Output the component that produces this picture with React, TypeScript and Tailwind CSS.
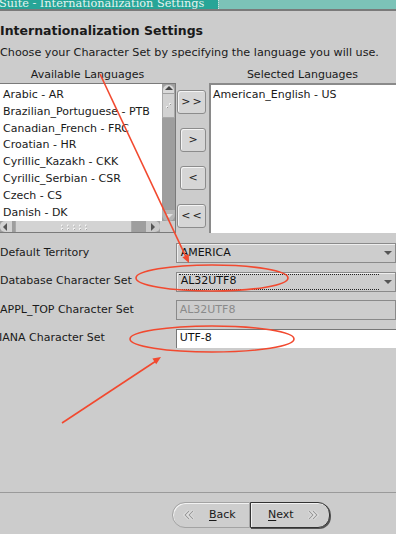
import React from "react";

const font = { fontFamily: '"DejaVu Sans", "Liberation Sans", sans-serif' };

const leftItems = [
  "Arabic - AR",
  "Brazilian_Portuguese - PTB",
  "Canadian_French - FRC",
  "Croatian - HR",
  "Cyrillic_Kazakh - CKK",
  "Cyrillic_Serbian - CSR",
  "Czech - CS",
  "Danish - DK",
];

function Dots({ vertical }: { vertical?: boolean }) {
  return (
    <svg width={vertical ? 10 : 30} height={vertical ? 10 : 8}>
      {vertical ? (
        <>
          <circle cx="3" cy="6" r="0.9" fill="#fff" />
          <circle cx="6" cy="3" r="0.9" fill="#fff" />
          <circle cx="3.5" cy="6.5" r="0.6" fill="#888" />
          <circle cx="6.5" cy="3.5" r="0.6" fill="#888" />
        </>
      ) : (
        [0, 1, 2, 3, 4].map((i) => (
          <g key={i}>
            <circle cx={3 + i * 6} cy="2.5" r="0.9" fill="#fff" />
            <circle cx={3 + i * 6} cy="6" r="0.9" fill="#fff" />
            <circle cx={3.5 + i * 6} cy="3" r="0.6" fill="#999" />
            <circle cx={3.5 + i * 6} cy="6.5" r="0.6" fill="#999" />
          </g>
        ))
      )}
    </svg>
  );
}

function Tri({ dir, color = "#444" }: { dir: "up" | "down" | "left" | "right"; color?: string }) {
  const pts = {
    up: "1,6 5,2 9,6",
    down: "1,3 5,7 9,3",
    left: "6,1 2,5 6,9",
    right: "3,1 7,5 3,9",
  }[dir];
  return (
    <svg width="10" height="10">
      <polygon points={pts} fill={color} />
    </svg>
  );
}

function MoveBtn({ label, wide }: { label: string; wide?: boolean }) {
  return (
    <div
      className={`${wide ? "w-[29px]" : "w-[26px]"} h-[24px] flex items-center justify-center rounded-[3px] border border-[#8c8c8c] bg-[#d6d6d6] text-[11px] text-[#222] shadow-[inset_1px_1px_0_#f4f4f4]`}
    >
      <span className="tracking-[2px] pl-[2px]">{label}</span>
    </div>
  );
}

function Dropdown({ value, focus }: { value: string; focus?: boolean }) {
  return (
    <div className="relative h-[20px] w-[222px] border border-[#8a8a8a] bg-[#cdcdcd] flex items-center shadow-[inset_1px_1px_0_#eeeeee]">
      <div
        className={`ml-[2px] h-[16px] w-[200px] flex items-center pl-[2px] text-[11px] text-[#111] ${
          focus ? "border-y border-dotted border-[#222]" : "border-y border-transparent"
        }`}
      >
        {value}
      </div>
      <div className="absolute right-[2px] top-[5px]">
        <svg width="10" height="8">
          <polygon points="1,2 9,2 5,6" fill="#555" />
        </svg>
      </div>
    </div>
  );
}

function Chevrons({ dir }: { dir: "left" | "right" }) {
  const d =
    dir === "left"
      ? ["M6 2 L2 6 L6 10", "M10 2 L6 6 L10 10"]
      : ["M2 2 L6 6 L2 10", "M6 2 L10 6 L6 10"];
  return (
    <svg width="12" height="12">
      {d.map((p, i) => (
        <g key={i}>
          <path d={p} stroke="#ffffff" strokeWidth="2.4" fill="none" />
          <path d={p} stroke="#9a9a9a" strokeWidth="1.3" fill="none" />
        </g>
      ))}
    </svg>
  );
}

export default function App() {
  return (
    <div
      className="relative w-[396px] h-[534px] overflow-hidden bg-[#cccccc] flex flex-col text-[#1a1a1a]"
      style={font}
    >
      {/* title bar */}
      <div className="h-[9px] flex shrink-0">
        <div className="w-[218px] bg-[#27a597] overflow-hidden relative">
          <div
            className="absolute -left-[1px] bottom-[-3px] text-[11.3px] leading-[16px] text-[#e6f4f1] whitespace-nowrap"
            style={{ fontFamily: '"DejaVu Serif", "Liberation Serif", serif' }}
          >
            Suite - Internationalization Settings
          </div>
        </div>
        <div className="flex-1 bg-[#7cc3b8] border-l border-dotted border-[#c8e8e2]" />
      </div>
      <div className="h-[2px] bg-[#7a7a7a] shrink-0" />

      {/* heading */}
      <div className="mt-[13px] h-[14px] leading-[14px] text-[12.5px] font-bold whitespace-nowrap">
        Internationalization Settings
      </div>
      <div className="mt-[8px] h-[14px] leading-[14px] text-[11.2px] whitespace-nowrap">
        Choose your Character Set by specifying the language you will use.
      </div>
      <div className="mt-[8px] h-[14px] leading-[14px] text-[11px] flex whitespace-nowrap">
        <div className="w-[175px] text-center">Available Languages</div>
        <div className="w-[34px]" />
        <div className="w-[187px] text-center">Selected Languages</div>
      </div>

      {/* lists */}
      <div className="mt-[1px] h-[150px] flex shrink-0">
        <div className="w-[177px] h-[150px] border border-[#7a7a7a] -ml-[1px] bg-white flex flex-col">
          <div className="flex-1 flex min-h-0">
            <div className="flex-1 pt-[3px] pl-[3px] text-[11px] text-[#1a1a1a]">
              {leftItems.map((t) => (
                <div key={t} className="h-[16.8px] leading-[16.8px] whitespace-nowrap">
                  {t}
                </div>
              ))}
            </div>
            <div className="w-[13px] flex flex-col bg-[#9e9e9e]">
              <div className="h-[10px] rounded-t-[6px] bg-[#d9d9d9] border border-[#a0a0a0] flex items-center justify-center">
                <Tri dir="up" />
              </div>
              <div className="h-[24px] bg-[#d2d2d2] border-x border-b border-[#a9a9a9] flex items-center justify-center">
                <Dots vertical />
              </div>
              <div className="flex-1" />
              <div className="h-[11px] rounded-b-[6px] bg-[#b5b5b5] flex items-center justify-center">
                <Tri dir="down" color="#e0e0e0" />
              </div>
            </div>
          </div>
          <div className="h-[11px] flex bg-[#9e9e9e]">
            <div className="w-[12px] bg-[#d3d3d3] rounded-l-[5px] flex items-center justify-center">
              <Tri dir="left" color="#555" />
            </div>
            <div className="ml-[3px] w-[117px] bg-[#d3d3d3] flex items-center justify-center border-x border-[#aaa]">
              <Dots />
            </div>
            <div className="flex-1" />
            <div className="w-[14px] bg-[#c9c9c9] rounded-r-[5px] flex items-center justify-center">
              <Tri dir="right" color="#555" />
            </div>
            <div className="w-[15px] bg-[#cccccc]" />
          </div>
        </div>
        <div className="w-[31px] flex flex-col items-end pr-[1px] pt-[7px] gap-[14px]">
          <MoveBtn label=">>" wide />
          <MoveBtn label=">" />
          <MoveBtn label="<" />
          <MoveBtn label="<<" wide />
        </div>
        <div className="ml-[2px] flex-1 h-[150px] bg-white border-l-2 border-t-2 border-[#8a8a8a] pt-[2px] pl-[2px] text-[11px] whitespace-nowrap">
          American_English - US
        </div>
      </div>

      {/* form rows */}
      <div className="mt-[10px] flex flex-col text-[11px]">
        <div className="flex items-center h-[20px]">
          <div className="w-[177px] whitespace-nowrap">Default Territory</div>
          <Dropdown value="AMERICA" />
        </div>
        <div className="mt-[8px] flex items-center h-[21px]">
          <div className="w-[177px] whitespace-nowrap">Database Character Set</div>
          <Dropdown value="AL32UTF8" focus />
        </div>
        <div className="mt-[8px] flex items-center h-[20px]">
          <div className="w-[177px] whitespace-nowrap">APPL_TOP Character Set</div>
          <div className="h-[20px] w-[222px] border border-[#8a8a8a] bg-[#cdcdcd] flex items-center pl-[3px] text-[#8a8a8a]">
            AL32UTF8
          </div>
        </div>
        <div className="mt-[8px] flex items-center h-[20px]">
          <div className="w-[177px] whitespace-nowrap -ml-[1px]">IANA Character Set</div>
          <div className="ml-[1px] h-[19px] w-[222px] border-l border-t border-[#777] bg-white flex items-center pl-[3px] text-[#111]">
            UTF-8
          </div>
        </div>
      </div>

      {/* footer */}
      <div className="mt-auto h-px bg-[#9a9a9a] shrink-0" />
      <div className="h-[41px] shrink-0 flex items-start pt-[9px] pl-[172px]">
        <div className="h-[26px] w-[78px] rounded-l-[13px] border border-[#a3a3a3] bg-[#cecece] shadow-[inset_1px_1px_0_#f2f2f2] flex items-center text-[11px]">
          <div className="ml-[10px]">
            <Chevrons dir="left" />
          </div>
          <div className="ml-[14px]">
            <span className="underline underline-offset-2">B</span>ack
          </div>
        </div>
        <div className="h-[26px] w-[80px] rounded-r-[12px] border border-[#333] bg-[#cecece] shadow-[inset_1px_1px_0_#f2f2f2,1px_1px_0_#555] flex items-center text-[11px]">
          <div className="ml-[17px]">
            <span className="underline underline-offset-2">N</span>ext
          </div>
          <div className="ml-[13px]">
            <Chevrons dir="right" />
          </div>
        </div>
      </div>

      {/* annotations */}
      <svg className="absolute left-0 top-0 pointer-events-none" width="396" height="534">
        <g stroke="#f2492f" fill="none" strokeWidth="1.6">
          <line x1="100" y1="74" x2="186" y2="257" />
          <ellipse cx="212" cy="278" rx="76" ry="13" />
          <ellipse cx="212" cy="339" rx="82" ry="13" />
          <line x1="62" y1="423" x2="156" y2="361" />
        </g>
        <polygon points="189,263 188.8,254.3 182.4,257.3" fill="#f2492f" />
        <polygon points="161,357 156.2,364.3 152.4,358.5" fill="#f2492f" />
      </svg>
    </div>
  );
}
